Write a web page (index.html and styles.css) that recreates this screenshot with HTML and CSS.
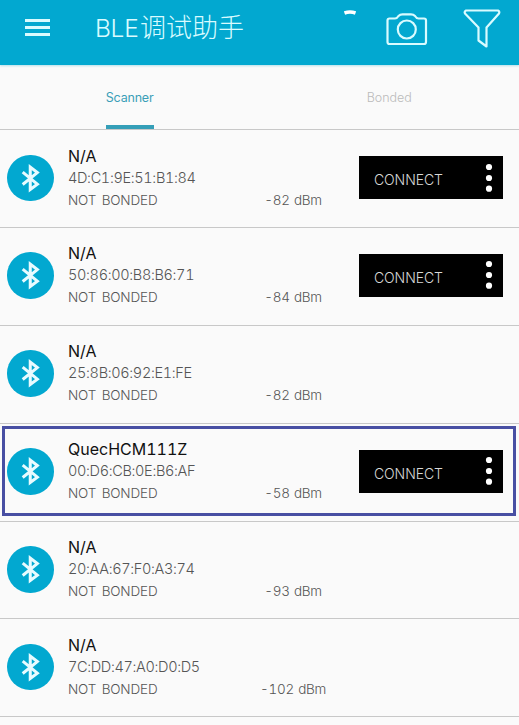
FILE: index.html
```
<!DOCTYPE html>
<html lang="zh-CN">
<head>
    <meta charset="UTF-8">
    <meta name="viewport" content="width=device-width, initial-scale=1.0">
    <title>BLE调试助手</title>
    <link rel="stylesheet" href="styles.css">
</head>
<body>

    <!-- shared icons -->
    <svg class="sprite">
        <symbol id="bluetooth" viewBox="0 0 46 46">
            <path d="M15.5 17 L30 28.8 L23 34 V12 L30 17.4 L15.5 29.2"/>
        </symbol>
        <symbol id="dots" viewBox="0 0 8 30">
            <circle cx="4" cy="4" r="3.1"/>
            <circle cx="4" cy="15" r="3.1"/>
            <circle cx="4" cy="25.7" r="3.1"/>
        </symbol>
    </svg>

    <header class="toolbar">
        <div class="menu"><span></span><span></span><span></span></div>
        <h1><span class="latin">BLE</span>调试助手</h1>
        <svg class="progress" viewBox="0 0 12 6"><path d="M0.5 4 Q6 2 11.5 4"/></svg>
        <svg class="camera" viewBox="0 0 42 34">
            <path d="M3.5 6.5 H9 Q11 6.5 12.5 4 Q14 2.3 16.5 2.3 H25 Q27.5 2.3 29 4 Q30.5 6.5 32.5 6.5 H38 Q40 6.5 40 8.5 V30 Q40 32 38 32 H3.5 Q1.5 32 1.5 30 V8.5 Q1.5 6.5 3.5 6.5 Z"/>
            <circle cx="20.8" cy="17.5" r="9"/>
        </svg>
        <svg class="filter" viewBox="0 0 38 40">
            <path d="M3 1.5 H35 Q37 2.5 36 4.5 L23.5 18.5 V37.5 L15.5 31.5 V18.5 L2 4.5 Q1 2.5 3 1.5 Z"/>
        </svg>
    </header>

    <nav class="tabs">
        <div class="tab active"><span>Scanner</span></div>
        <div class="tab"><span>Bonded</span></div>
    </nav>

    <main class="devices">
        <div class="device">
            <svg class="avatar"><use href="#bluetooth"/></svg>
            <div class="info">
                <div class="name">N/A</div>
                <div class="mac">4D:C1:9E:51:B1:84</div>
                <div class="status"><span class="bond">NOT BONDED</span><span class="rssi">-82 dBm</span></div>
            </div>
            <button class="connect">CONNECT<svg class="dots"><use href="#dots"/></svg></button>
        </div>
        <div class="device">
            <svg class="avatar"><use href="#bluetooth"/></svg>
            <div class="info">
                <div class="name">N/A</div>
                <div class="mac">50:86:00:B8:B6:71</div>
                <div class="status"><span class="bond">NOT BONDED</span><span class="rssi">-84 dBm</span></div>
            </div>
            <button class="connect">CONNECT<svg class="dots"><use href="#dots"/></svg></button>
        </div>
        <div class="device">
            <svg class="avatar"><use href="#bluetooth"/></svg>
            <div class="info">
                <div class="name">N/A</div>
                <div class="mac">25:8B:06:92:E1:FE</div>
                <div class="status"><span class="bond">NOT BONDED</span><span class="rssi">-82 dBm</span></div>
            </div>
        </div>
        <div class="device selected">
            <svg class="avatar"><use href="#bluetooth"/></svg>
            <div class="info">
                <div class="name">QuecHCM111Z</div>
                <div class="mac">00:D6:CB:0E:B6:AF</div>
                <div class="status"><span class="bond">NOT BONDED</span><span class="rssi">-58 dBm</span></div>
            </div>
            <button class="connect">CONNECT<svg class="dots"><use href="#dots"/></svg></button>
        </div>
        <div class="device">
            <svg class="avatar"><use href="#bluetooth"/></svg>
            <div class="info">
                <div class="name">N/A</div>
                <div class="mac">20:AA:67:F0:A3:74</div>
                <div class="status"><span class="bond">NOT BONDED</span><span class="rssi">-93 dBm</span></div>
            </div>
        </div>
        <div class="device">
            <svg class="avatar"><use href="#bluetooth"/></svg>
            <div class="info">
                <div class="name">N/A</div>
                <div class="mac">7C:DD:47:A0:D0:D5</div>
                <div class="status"><span class="bond">NOT BONDED</span><span class="rssi">-102 dBm</span></div>
            </div>
        </div>
    </main>

</body>
</html>
```

FILE: styles.css
```
* {
    box-sizing: border-box;
}
body {
    margin: 0;
    height: 725px;
    overflow: hidden;
    background-color: #fafafa;
    color: #555;
    font-family: Inter, "Noto Sans CJK SC", sans-serif;
    font-weight: 300;
    font-variant-numeric: tabular-nums;
}
.sprite {
    display: none;
}
.toolbar {
    display: flex;
    align-items: flex-start;
    height: 65px;
    background-color: #02a8d0;
    box-shadow: 0 1px 2px #b5dfe9;
}
.toolbar svg {
    fill: none;
    stroke: #d9fbff;
    stroke-width: 2.2;
    stroke-linejoin: round;
}
.menu {
    display: flex;
    flex-direction: column;
    gap: 4px;
    width: 25px;
    margin: 19px 0 0 25px;
}
.menu span {
    height: 3px;
    background-color: #d9fbff;
}
h1 {
    width: 200px;
    margin: 9px 0 0 45px;
    color: #d9fbff;
    font-size: 26px;
    font-weight: 300;
    line-height: 38px;
    white-space: nowrap;
}
.latin {
    display: inline-block;
    width: 45px;
    font-size: 24.5px;
    font-weight: 300;
    letter-spacing: -0.3px;
}
.toolbar .progress {
    width: 12px;
    height: 6px;
    margin: 9px 0 0 49px;
    stroke: #fff;
    stroke-width: 3.5;
}
.camera {
    width: 42px;
    height: 34px;
    margin: 12px 0 0 30px;
}
.filter {
    width: 38px;
    height: 40px;
    margin: 9px 0 0 35px;
}
.tabs {
    display: flex;
    height: 65px;
    border-bottom: 1px solid #c8c8c8;
}
.tab {
    display: flex;
    justify-content: center;
    width: 50%;
    color: #bbb;
    font-size: 12.5px;
    line-height: 66px;
}
.tab.active {
    color: #3a9fb8;
    font-weight: 400;
    letter-spacing: -0.2px;
}
.tab.active span {
    width: 48px;
    border-bottom: 4px solid #359fb8;
    height: 64px;
    white-space: nowrap;
}
.device {
    display: flex;
    height: 97.9px;
    padding-left: 7px;
    border-bottom: 1px solid #c8c8c8;
}
.avatar {
    width: 46.5px;
    height: 46.5px;
    margin-top: 24.5px;
    border-radius: 50%;
    background-color: #02a8d0;
    fill: none;
    stroke: #e8fbff;
    stroke-width: 3;
}
.info {
    width: 305.5px;
    padding: 14.6px 0 0 14.5px;
}
.name {
    color: #111;
    font-size: 16px;
    font-weight: 400;
    line-height: 22px;
}
.mac {
    font-size: 14.5px;
    letter-spacing: -0.35px;
    line-height: 21px;
}
.status {
    display: flex;
    font-size: 13.5px;
    line-height: 24px;
}
.bond {
    width: 180px;
    word-spacing: 2px;
    letter-spacing: -0.15px;
}
.rssi {
    width: 90px;
    text-align: center;
    letter-spacing: -0.3px;
    word-spacing: 1px;
}
.connect {
    display: flex;
    align-items: center;
    justify-content: space-between;
    width: 144px;
    height: 43px;
    margin-top: 26px;
    padding: 4px 10px 0 15px;
    border: none;
    background-color: #000;
    color: #d8d8d8;
    font: inherit;
    font-size: 14px;
    letter-spacing: -0.1px;
}
.dots {
    width: 8px;
    height: 30px;
    margin-top: -4px;
    fill: #fff;
}
.selected {
    position: relative;
}
/* highlight frame over the row */
.selected::after {
    content: "";
    position: absolute;
    top: 2px;
    left: 2px;
    right: 3px;
    bottom: 5px;
    border: 3px solid #484fa3;
}
```
